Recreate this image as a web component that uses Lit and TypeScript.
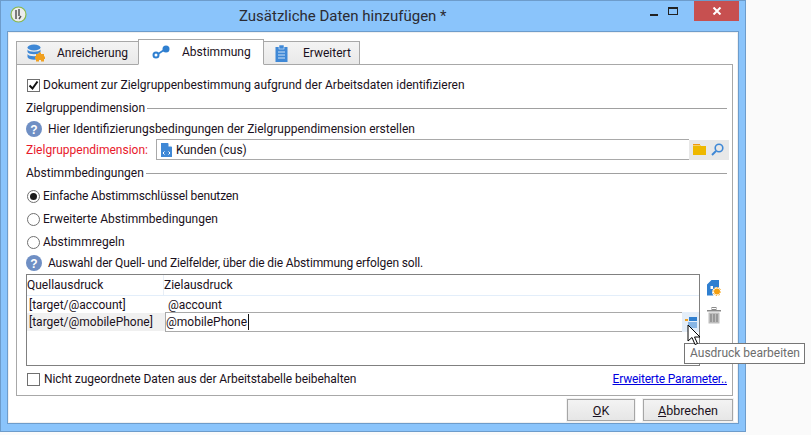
import { LitElement, html, css } from "lit";
import { customElement } from "lit/decorators.js";

const helpIcon = html`<svg class="help" width="16" height="16" viewBox="0 0 16 16"><circle cx="8" cy="8" r="8" fill="#6f8fc4"/><text x="8" y="12.5" text-anchor="middle" font-family="Liberation Sans" font-weight="700" font-size="12" fill="#fff">?</text></svg>`;

@customElement("app-root")
export class AppRoot extends LitElement {
  static styles = css`
    :host { display: block; width: 811px; height: 435px; background: #fafafa; position: relative; overflow: hidden;
      font-family: "Roboto", "Open Sans", sans-serif; font-size: 12px; color: #1a1020; }
    * { box-sizing: border-box; }
    .window { width: 746px; height: 432px; background: #8ac4fb; border: 1px solid #6d9ccb; display: flex; flex-direction: column; padding: 0 6px 7px 6px; }
    .titlebar { height: 30px; display: flex; align-items: flex-start; flex: none; position: relative; }
    .appicon { margin: 5px 0 0 3px; flex: none; }
    .title { flex: 1; font-size: 15px; line-height: 20px; padding-top: 5px; color: #2b2b33; margin-left: 212px; }
    .winbtns { display: flex; align-items: flex-start; }
    .min { width: 26px; height: 21px; display: flex; justify-content: center; }
    .min i { display: block; width: 8px; height: 2px; background: #222; margin-top: 13px; margin-left: -3px; }
    .max { width: 18px; height: 21px; margin-right: 8px; }
    .max i { display: block; width: 10px; height: 8px; border: 1px solid #222; border-top-width: 2px; margin-top: 6px; }
    .close { width: 45px; height: 20px; background: #c75050; display: flex; align-items: center; justify-content: center; }
    .client { flex: 1; background: #fff; border: 1px solid #6d9ccb; display: flex; flex-direction: column; min-height: 0; box-shadow: inset 0 0 0 1px #f0f0f0; }
    .inner { flex: 1; display: flex; flex-direction: column; padding: 7px 5px 4px 8px; min-height: 0; }
    .tabs { display: flex; align-items: flex-end; height: 26px; flex: none; margin-bottom: -1px; position: relative; z-index: 1; }
    .tab { height: 24px; border: 1px solid #a8a8a8; background: linear-gradient(#f4f4f4, #e9e9e9); display: flex; align-items: center; margin-right: -1px; flex: none; }
    .tab.active { height: 26px; background: #fff; border-bottom-color: #fff; position: relative; z-index: 2; }
    .t1 { width: 123px; padding-left: 10px; gap: 12px; }
    .t2 { width: 126px; padding-left: 13px; gap: 12px; }
    .t3 { width: 97px; padding-left: 11px; gap: 14px; }
    .panel { width: 717px; height: 332px; border: 1px solid #a8a8a8; padding: 0 5px 0 10px; flex: none; display: flex; flex-direction: column; }
    .row { display: flex; align-items: center; flex: none; }
    .check { width: 13px; height: 13px; border: 1px solid #707070; background: #fff; flex: none; display: flex; align-items: center; justify-content: center; }
    .radio { width: 13px; height: 13px; border: 1px solid #707070; border-radius: 50%; background: #fff; flex: none; margin-right: 3px; display: flex; align-items: center; justify-content: center; }
    .radio i { display: block; width: 7px; height: 7px; border-radius: 50%; background: #1a1a1a; }
    .check + span { margin-left: 3px; }
    .cb1 { height: 16px; margin-top: 12px; }
    .legend { height: 14px; margin-top: 8px; gap: 2px; margin-left: -1px; }
    .legend b { font-weight: 400; }
    .legend::after { content: ""; flex: 1; height: 1px; background: #a0a0a0; }
    .help-row { gap: 6px; height: 16px; margin-left: -1px; }
    .help { flex: none; }
    .h1 { margin-top: 6px; }
    .dim { margin-top: 2px; height: 21px; margin-left: -1px; }
    .red { color: #e8192c; width: 130px; flex: none; }
    .field { width: 533px; height: 21px; border: 1px solid #a9a9a9; border-right: 0; display: flex; align-items: center; padding-left: 4px; gap: 4px; flex: none; }
    .fbtns { width: 40px; height: 20px; background: #e8e8e8; display: flex; align-items: center; justify-content: space-between; padding: 0 5px 0 4px; flex: none; }
    .r1 { height: 16px; margin-top: 8px; }
    .r2 { height: 16px; margin-top: 7px; }
    .tight { letter-spacing: -0.14px; }
    .leg2 { margin-top: 6px; }
    .h2 { margin-top: 5px; }
    .tablewrap { display: flex; margin-top: 3px; flex: none; height: 92px; margin-left: -1px; }
    .table { width: 674px; height: 92px; border: 1px solid #808080; display: flex; flex-direction: column; flex: none; }
    .thead { height: 21px; display: grid; grid-template-columns: 137px 1fr; border-bottom: 1px solid #e3eefa; flex: none; }
    .thead span { padding: 1px 0 0 0; line-height: 19px; }
    .thead span:first-child { border-right: 1px solid #e8eef6; }
    .tr1 { height: 16px; display: flex; align-items: center; margin-top: 1px; flex: none; }
    .tr1 span:first-child { width: 137px; padding-left: 2px; }
    .tr1 span:last-child { padding-left: 4px; }
    .tr2 { height: 21px; display: flex; flex: none; margin-top: -1px; }
    .src { width: 138px; height: 18px; margin-top: 1px; background: #f0f0f0; padding-left: 2px; line-height: 19px; flex: none; }
    .edit { width: 517px; height: 20px; border: 1px solid #a9a9a9; border-right: 0; line-height: 17px; display: flex; align-items: center; flex: none; }
    .caret { width: 1px; height: 16px; background: #111; margin-left: 1px; }
    .ebtn { width: 17px; height: 20px; background: #e4eef9; display: flex; align-items: center; justify-content: center; flex: none; }
    .side { display: flex; flex-direction: column; align-items: flex-start; padding: 6px 0 0 7px; gap: 11px; }
    .foot { height: 16px; margin-top: 5px; justify-content: space-between; }
    .foot .left { display: flex; align-items: center; }
    .foot .left span { margin-left: 4px; letter-spacing: -0.07px; }
    .link { color: #0000e0; text-decoration: underline; letter-spacing: -0.18px; }
    .actions { flex: 1; display: flex; justify-content: flex-end; align-items: flex-start; padding: 3px 0 0 0; gap: 8px; }
    .btn { height: 22px; border: 1px solid #a6a6a6; background: linear-gradient(#f3f3f3, #e6e6e6); outline: 1px solid #f2f2f2; font-size: 12.5px; display: flex; align-items: center; justify-content: center; }
    .ok { width: 68px; }
    .cancel { width: 90px; }
    u { text-decoration: underline; }
    .tooltip { position: absolute; left: 684px; top: 343px; width: 121px; height: 21px; background: #fff; border: 1px solid #767676; color: #6d6d6d; line-height: 19px; padding-left: 5px; white-space: nowrap; z-index: 5; }
    .cursor { position: absolute; left: 687px; top: 324px; z-index: 6; }
  `;

  render() {
    return html`
      <div class="window">
        <div class="titlebar">
          <svg class="appicon" width="17" height="17" viewBox="0 0 17 17"><circle cx="8.5" cy="8.5" r="7.5" fill="#ececec" stroke="#8ab84a" stroke-width="1.2"/><path d="M6 4v9M9 3v7M11 10l-2 3" stroke="#555" stroke-width="1.5" fill="none"/></svg>
          <div class="title">Zusätzliche Daten hinzufügen *</div>
          <div class="winbtns">
            <div class="min"><i></i></div>
            <div class="max"><i></i></div>
            <div class="close"><svg width="10" height="8" viewBox="0 0 10 8"><path d="M1.5 0.5l7 7M8.5 0.5l-7 7" stroke="#fff" stroke-width="2"/></svg></div>
          </div>
        </div>
        <div class="client"><div class="inner">
          <div class="tabs">
            <div class="tab t1">
              <svg width="18" height="18" viewBox="0 0 18 18"><ellipse cx="7" cy="3.5" rx="6.5" ry="3" fill="#3f88d6"/><path d="M.5 5.500c1 3 12 3 13 0v2.500c-1 3-12 3-13 0zM.5 10c1 3 12 3 13 0v3c-1 3.500-12 3.500-13 0z" fill="#3f88d6"/><path d="M9 10h2.500V8.500h2.500V10h3v2.500h1v2.500h-1v2.500h-3V16h-2v1.500H9V15H8v-2.500h1z" fill="#f0a020"/></svg>
              <span>Anreicherung</span>
            </div>
            <div class="tab t2 active">
              <svg width="18" height="14" viewBox="0 0 18 14"><circle cx="14" cy="4" r="3.500" fill="#2f7fd0"/><circle cx="4" cy="10" r="2.500" fill="none" stroke="#2f7fd0" stroke-width="2"/><path d="M6 9l6-4" stroke="#2f7fd0" stroke-width="1.600"/></svg>
              <span>Abstimmung</span>
            </div>
            <div class="tab t3">
              <svg width="14" height="17" viewBox="0 0 14 17"><rect x="0.500" y="2" width="12" height="15" fill="#3f88d6"/><rect x="4" y="0" width="5" height="4" fill="#3f88d6" stroke="#fff" stroke-width=".5"/><path d="M3 7h7M3 10h7M3 13h7" stroke="#cfe3f7" stroke-width="1"/></svg>
              <span>Erweitert</span>
            </div>
          </div>
          <div class="panel">
            <div class="row cb1"><div class="check"><svg width="11" height="11" viewBox="0 0 11 11"><path d="M1.500 5.500l3 3 5-7" stroke="#111" stroke-width="2" fill="none"/></svg></div><span>Dokument zur Zielgruppenbestimmung aufgrund der Arbeitsdaten identifizieren</span></div>
            <div class="row legend"><b>Zielgruppendimension</b></div>
            <div class="row help-row h1">${helpIcon}<span>Hier Identifizierungsbedingungen der Zielgruppendimension erstellen</span></div>
            <div class="row dim">
              <span class="red">Zielgruppendimension:</span>
              <div class="field">
                <svg width="11" height="14" viewBox="0 0 11 14"><path d="M0 0h7l4 4v10H0z" fill="#3f88d6"/><path d="M7.500 0v3.500H11" fill="#fff"/><path d="M3.500 8.500L2 10l1.500 1.500M7.500 8.500L9 10l-1.500 1.500" stroke="#fff" fill="none"/></svg>
                <span>Kunden (cus)</span>
              </div>
              <div class="fbtns">
                <svg width="13" height="11" viewBox="0 0 13 11"><path d="M0 0h7v1H0z" fill="#f09a10"/><path d="M0 2h13v9H0z" fill="#eeb800"/><path d="M0 1h8v1H0z" fill="#f5d070"/></svg>
                <svg width="13" height="13" viewBox="0 0 13 13"><circle cx="8" cy="5" r="3.800" fill="none" stroke="#3f88d6" stroke-width="1.600"/><path d="M5 8l-4 4" stroke="#3f88d6" stroke-width="2"/></svg>
              </div>
            </div>
            <div class="row legend leg2"><b>Abstimmbedingungen</b></div>
            <div class="row r1"><div class="radio"><i></i></div><span class="tight">Einfache Abstimmschlüssel benutzen</span></div>
            <div class="row r2"><div class="radio"></div><span>Erweiterte Abstimmbedingungen</span></div>
            <div class="row r2"><div class="radio"></div><span>Abstimmregeln</span></div>
            <div class="row help-row h2">${helpIcon}<span class="tight">Auswahl der Quell- und Zielfelder, über die die Abstimmung erfolgen soll.</span></div>
            <div class="tablewrap">
              <div class="table">
                <div class="thead"><span>Quellausdruck</span><span>Zielausdruck</span></div>
                <div class="tr1"><span>[target/@account]</span><span>@account</span></div>
                <div class="tr2">
                  <div class="src">[target/@mobilePhone]</div>
                  <div class="edit">@mobilePhone<div class="caret"></div></div>
                  <div class="ebtn"><svg width="12" height="11" viewBox="0 0 12 11"><rect x="0" y="2" width="3" height="2" fill="#f0a020"/><rect x="4" y="0" width="8" height="4" fill="#2f7fd0"/><path d="M3 6h9M3 8h9M3 10h9" stroke="#2f7fd0"/></svg></div>
                </div>
              </div>
              <div class="side">
                <svg width="14" height="16" viewBox="0 0 14 16"><path d="M4.500 0H12v7.500A5 5 0 0 0 6.500 15.500H0V4.500z" fill="#2f7fd0"/><path d="M3.500 6h2.500v3H3.500z" fill="#fff"/><circle cx="10" cy="11.500" r="3" fill="#f5a010"/><circle cx="10" cy="11.500" r="4" fill="none" stroke="#f5a010" stroke-width="1" stroke-dasharray="1.500 1.500"/></svg>
                <svg width="14" height="17" viewBox="0 0 14 17"><rect x="0" y="3" width="14" height="1.500" fill="#8a8a8a"/><rect x="5" y="0.500" width="4" height="2" fill="none" stroke="#8a8a8a"/><path d="M1.500 5.500h11V16.500h-11z" fill="#bdbdbd"/><path d="M4 7v8M7 7v8M10 7v8" stroke="#808080" stroke-width="1.200"/></svg>
              </div>
            </div>
            <div class="row foot">
              <div class="left"><div class="check"></div><span>Nicht zugeordnete Daten aus der Arbeitstabelle beibehalten</span></div>
              <span class="link">Erweiterte Parameter..</span>
            </div>
          </div>
          <div class="actions">
            <div class="btn ok"><span><u>O</u>K</span></div>
            <div class="btn cancel"><span><u>A</u>bbrechen</span></div>
          </div>
        </div></div>
      </div>
      <div class="tooltip">Ausdruck bearbeiten</div>
      <svg class="cursor" width="14" height="22" viewBox="0 0 14 22"><path d="M1 1v16l4-3.500 3 7 2.500-1-3-6.500h5.500z" fill="#fff" stroke="#000" stroke-width="1"/></svg>
    `;
  }
}
